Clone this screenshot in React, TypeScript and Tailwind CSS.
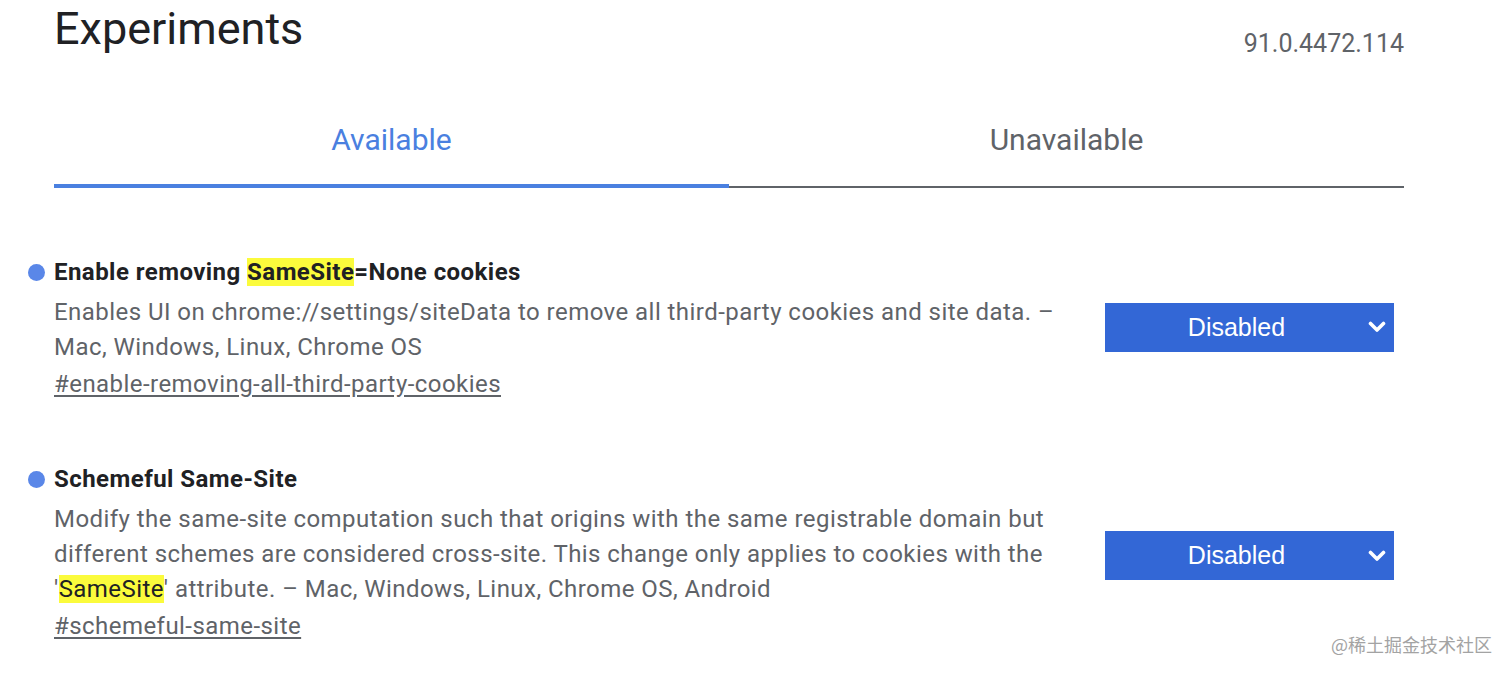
import React from 'react';

const font = { fontFamily: 'Roboto, "Noto Sans", Arial, sans-serif' };

function Mark({ children }: { children: React.ReactNode }) {
  return <span className="bg-[#fbfb3c] text-[#202124]">{children}</span>;
}

function Select() {
  return (
    <div className="flex h-[49px] w-[289px] items-center bg-[#3367d6] text-white" style={{ fontFamily: '"Liberation Sans", Arial, sans-serif' }}>
      <span className="flex-1 text-center text-[25px] leading-none">Disabled</span>
      <svg width="18" height="12" viewBox="0 0 18 12" className="mr-[8px]">
        <polyline points="2.5,2.5 9,9 15.5,2.5" fill="none" stroke="white" strokeWidth="3.6" strokeLinecap="round" strokeLinejoin="round" />
      </svg>
    </div>
  );
}

function Experiment({ title, lines, link, selectClass }: { title: React.ReactNode; lines: React.ReactNode[]; link: string; selectClass: string }) {
  return (
    <div>
      <div className="-ml-[26px] flex items-center gap-[9px]">
        <span className="h-[17px] w-[17px] rounded-full bg-[#5a87e8]" />
        <h2 className="text-[24px] leading-[35px] font-bold tracking-[0.45px] text-[#202124]">{title}</h2>
      </div>
      <div className="mt-[5px] flex items-center">
        <div className="w-[1010px] text-[24px] leading-[35px] tracking-[0.45px] text-[#5f6368]">
          {lines.map((l, i) => (
            <div key={i} className="whitespace-nowrap">{l}</div>
          ))}
        </div>
        <div className={`mr-[10px] ml-auto ${selectClass}`}>
          <Select />
        </div>
      </div>
      <a className="mt-[2px] block text-[24px] leading-[35px] tracking-[0.45px] text-[#5f6368] underline underline-offset-[3px]">{link}</a>
    </div>
  );
}

export default function App() {
  return (
    <div className="relative h-[677px] w-[1512px] overflow-hidden bg-white" style={font}>
      <div className="ml-[54px] w-[1350px]">
        <header className="flex justify-between pt-[2px]">
          <h1 className="text-[45px] leading-[54px] text-[#202124]">Experiments</h1>
          <div className="mt-[28px] text-[25px] leading-[28px] text-[#5f6368]">91.0.4472.114</div>
        </header>

        <div className="mt-[64px] grid grid-cols-2">
          <div className="flex flex-col items-center">
            <span className="text-[30px] leading-[36px] text-[#4a80e0]">Available</span>
            <div className="mt-[26px] h-[4px] w-full bg-[#4a80e0]" />
          </div>
          <div className="flex flex-col items-center">
            <span className="text-[30px] leading-[36px] text-[#5f6368]">Unavailable</span>
            <div className="mt-[28px] h-[2px] w-full bg-[#5f6368]" />
          </div>
        </div>

        <div className="mt-[67px] flex flex-col gap-[60px]">
          <Experiment
            title={<>Enable removing <Mark>SameSite</Mark>=None cookies</>}
            lines={[
              'Enables UI on chrome://settings/siteData to remove all third-party cookies and site data. –',
              'Mac, Windows, Linux, Chrome OS',
            ]}
            link="#enable-removing-all-third-party-cookies"
            selectClass="-translate-y-[3px]"
          />
          <Experiment
            title="Schemeful Same-Site"
            lines={[
              'Modify the same-site computation such that origins with the same registrable domain but',
              'different schemes are considered cross-site. This change only applies to cookies with the',
              <>'<Mark>SameSite</Mark>' attribute. – Mac, Windows, Linux, Chrome OS, Android</>,
            ]}
            link="#schemeful-same-site"
            selectClass="translate-y-[1px]"
          />
        </div>
      </div>

      <div className="absolute right-[20px] bottom-[19px] text-[18px] text-[#a3a3a3]" style={{ fontFamily: '"Noto Sans CJK SC", sans-serif' }}>
        @稀土掘金技术社区
      </div>
    </div>
  );
}
